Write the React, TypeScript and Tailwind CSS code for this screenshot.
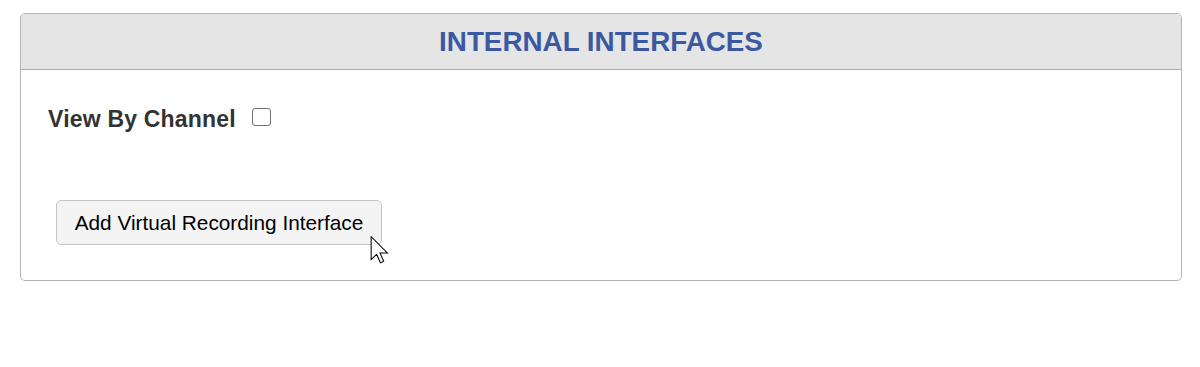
const Cursor = () => (
  <svg
    className="pointer-events-none absolute left-[314px] top-[36px]"
    width="20"
    height="28"
    viewBox="0 0 13 19"
  >
    <path
      d="M0.5 0.5 L0.5 16 L4.2 12.4 L6.8 18.2 L9 17.2 L6.5 11.5 L11.5 11.5 Z"
      fill="#fff"
      stroke="#000"
      strokeWidth="0.7"
      strokeLinejoin="miter"
    />
  </svg>
)

const App = () => {
  return (
    <div className="h-[367px] w-[1200px] bg-white pl-5 pt-[13px] font-['Liberation_Sans',Arial,sans-serif]">
      <div className="w-[1162px] overflow-hidden rounded-[5px] border border-[#b3b3b3]">
        <div className="flex h-[56px] items-center justify-center border-b border-[#acacac] bg-[#e5e5e5]">
          <h2 className="text-[27.8px] font-bold leading-none text-[#3a59a1]">
            INTERNAL INTERFACES
          </h2>
        </div>
        <div className="flex flex-col items-start px-[27px] pb-[35px] pt-[37px]">
          <label className="flex items-center gap-4">
            <span className="text-[23px] font-bold leading-6 tracking-[0.2px] text-[#333]">
              View By Channel
            </span>
            <span className="mb-[4px] h-[18px] w-[19px] rounded-[3px] border-[1.5px] border-[#707070] bg-white" />
          </label>
          <div className="relative ml-2 mt-[69px]">
            <button className="flex h-[45px] w-[326px] items-center justify-center rounded-[5px] border border-[#c6c6c6] bg-[#f4f4f4] text-[20.8px] text-black">
              Add Virtual Recording Interface
            </button>
            <Cursor />
          </div>
        </div>
      </div>
    </div>
  )
}

export default App
